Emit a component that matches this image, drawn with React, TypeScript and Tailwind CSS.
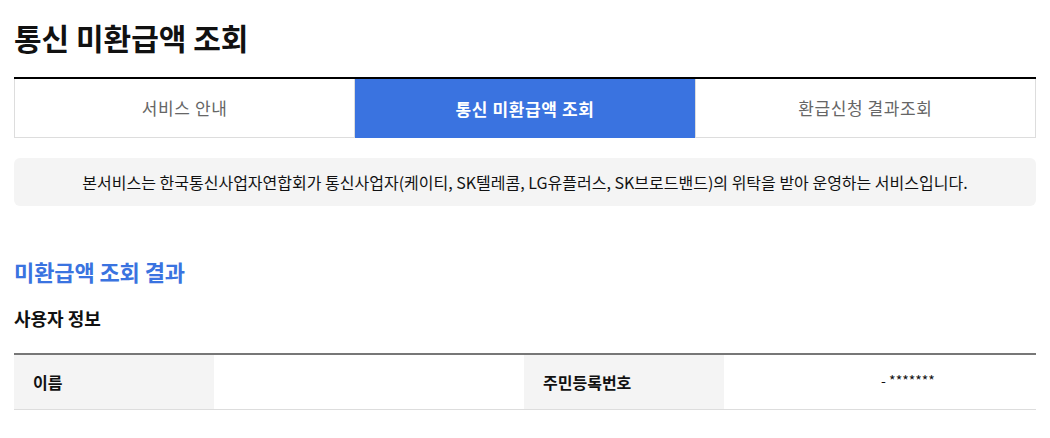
import React from "react";

const font = { fontFamily: '"Noto Sans CJK KR", "Noto Sans", sans-serif' };

export default function App() {
  return (
    <div className="w-[1050px] h-[438px] bg-white overflow-hidden" style={font}>
      <div className="px-[14px] pt-[15px]">
        <h1 className="text-[30px] leading-[44px] font-bold text-[#111]">통신 미환급액 조회</h1>
        <div className="mt-[18px] border-t-2 border-black flex h-[61px]">
          <div className="flex-1 flex items-center justify-center border border-t-0 border-[#dddddd] text-[17px] tracking-[0.6px] text-[#666]">서비스 안내</div>
          <div className="flex-1 flex items-center justify-center bg-[#3a73e0] text-white text-[17px] tracking-[0.6px] font-bold">통신 미환급액 조회</div>
          <div className="flex-1 flex items-center justify-center border border-t-0 border-[#dddddd] text-[17px] tracking-[0.6px] text-[#666]">환급신청 결과조회</div>
        </div>
        <div className="mt-[20px] h-[48px] rounded-md bg-[#f4f4f4] flex items-center justify-center text-[16px] text-[#111]">
          본서비스는 한국통신사업자연합회가 통신사업자(케이티, SK텔레콤, LG유플러스, SK브로드밴드)의 위탁을 받아 운영하는 서비스입니다.
        </div>
        <h2 className="mt-[50px] text-[22px] leading-[30px] font-bold text-[#3a73e0] tracking-[-0.1px]">미환급액 조회 결과</h2>
        <h3 className="mt-[20px] text-[18px] leading-[24px] font-bold text-[#111]">사용자 정보</h3>
        <div className="mt-[23px] border-t-2 border-[#777] border-b border-b-[#dddddd] flex h-[57px] text-[16px]">
          <div className="w-[200px] bg-[#f4f4f4] flex items-center pl-[19px] font-bold text-[#111]">이름</div>
          <div className="w-[310px]"></div>
          <div className="w-[200px] bg-[#f4f4f4] flex items-center pl-[19px] font-bold text-[#111]">주민등록번호</div>
          <div className="flex-1 flex items-start justify-center pl-[56px] pt-[15px] text-[14px] text-[#111]">- *******</div>
        </div>
      </div>
    </div>
  );
}
